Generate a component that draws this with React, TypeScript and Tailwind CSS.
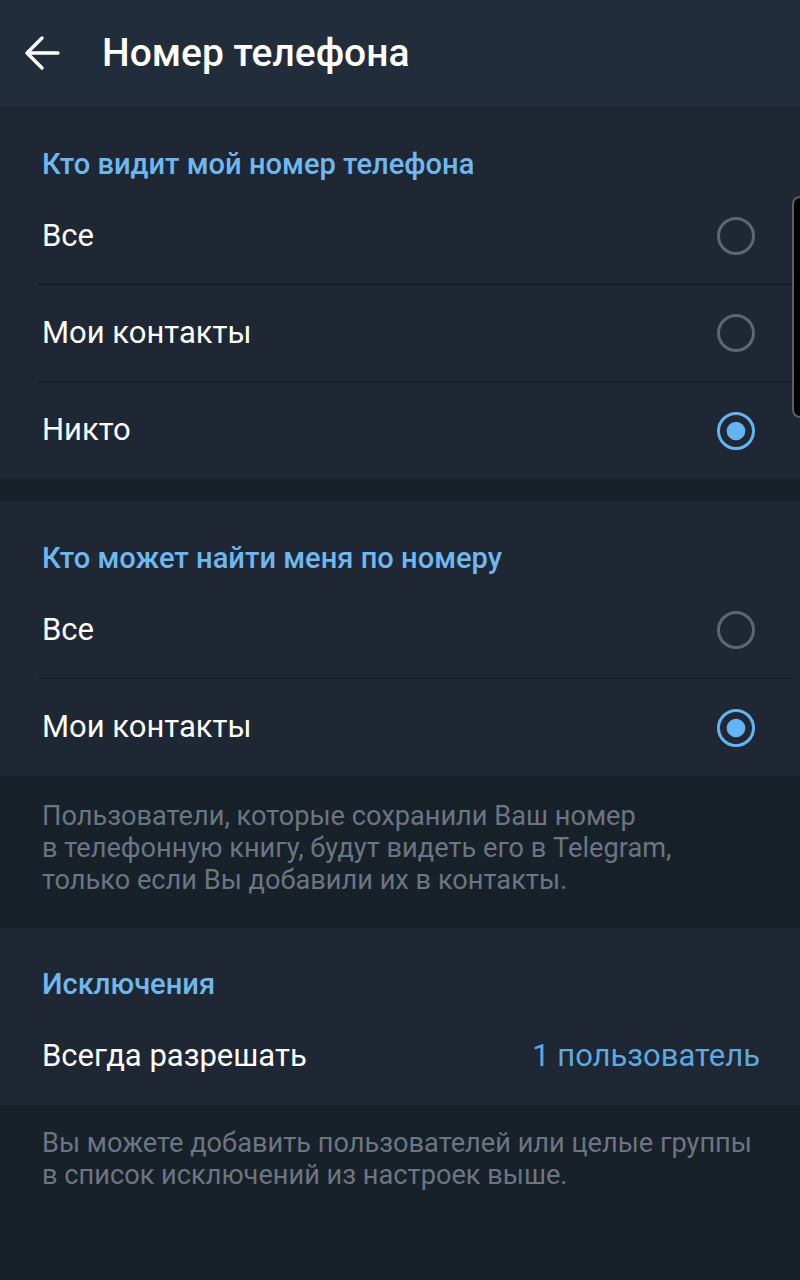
import React from 'react';

const font = { fontFamily: 'Roboto, "Noto Sans", sans-serif' };

function Radio({ checked }: { checked?: boolean }) {
  return (
    <svg width="40" height="40" viewBox="0 0 40 40" className="shrink-0">
      {checked ? (
        <>
          <circle cx="20" cy="20" r="17.5" fill="none" stroke="#62b5f2" strokeWidth="3" />
          <circle cx="20" cy="20" r="9.3" fill="#62b5f2" />
        </>
      ) : (
        <circle cx="20" cy="20" r="17.5" fill="none" stroke="#5c6772" strokeWidth="3" />
      )}
    </svg>
  );
}

function Row({ label, checked, divider }: { label: string; checked?: boolean; divider?: boolean }) {
  return (
    <div className="ml-[38px] mr-[8px] h-[97px] flex items-center justify-between pr-[36px]" style={{ borderBottom: divider ? '1px solid #141b23' : 'none' }}>
      <span className="pl-[4px] text-[31px] text-white">{label}</span>
      <Radio checked={checked} />
    </div>
  );
}

function SectionTitle({ children, first }: { children: React.ReactNode; first?: boolean }) {
  return (
    <div className={`${first ? 'pt-[42px] h-[82px]' : 'pt-[40px] h-[80px]'} px-[42px] text-[29.1px] leading-[32px] font-medium text-[#6fb8ef]`}>
      {children}
    </div>
  );
}

export default function App() {
  return (
    <div className="relative w-[800px] h-[1280px] overflow-hidden bg-[#18202a]" style={font}>
      <header className="h-[106px] bg-[#222d3b] flex items-center">
        <svg width="40" height="40" viewBox="0 0 40 40" className="ml-[22px]">
          <path d="M36 20H6M20 5 5 20l15 15" fill="none" stroke="#ffffff" strokeWidth="3.4" strokeLinecap="round" strokeLinejoin="round" />
        </svg>
        <h1 className="ml-[40px] text-[39px] font-medium text-white">Номер телефона</h1>
      </header>

      <section className="bg-[#1e2733]">
        <SectionTitle first>Кто видит мой номер телефона</SectionTitle>
        <Row label="Все" divider />
        <Row label="Мои контакты" divider />
        <Row label="Никто" checked />
      </section>

      <div className="h-[23px]" />

      <section className="bg-[#1e2733]">
        <SectionTitle>Кто может найти меня по номеру</SectionTitle>
        <Row label="Все" divider />
        <Row label="Мои контакты" checked />
      </section>

      <p className="h-[152px] pt-[24px] px-[42px] text-[27.2px] leading-[32px] text-[#6b7682]">
        Пользователи, которые сохранили Ваш номер<br />
        в телефонную книгу, будут видеть его в Telegram,<br />
        только если Вы добавили их в контакты.
      </p>

      <section className="bg-[#1e2733]">
        <SectionTitle>Исключения</SectionTitle>
        <div className="h-[97px] px-[42px] pr-[40px] flex items-center justify-between">
          <span className="text-[31px] text-white">Всегда разрешать</span>
          <span className="text-[31px] text-[#5ea9de]">1 пользователь</span>
        </div>
      </section>

      <p className="pt-[22px] px-[42px] text-[27.2px] leading-[32px] text-[#6b7682]">
        Вы можете добавить пользователей или целые группы<br />
        в список исключений из настроек выше.
      </p>

      <div className="absolute right-0 top-[196px] w-[8px] h-[222px] bg-black border-2 border-r-0 border-[#5b6067] rounded-l-[8px]" />
    </div>
  );
}
